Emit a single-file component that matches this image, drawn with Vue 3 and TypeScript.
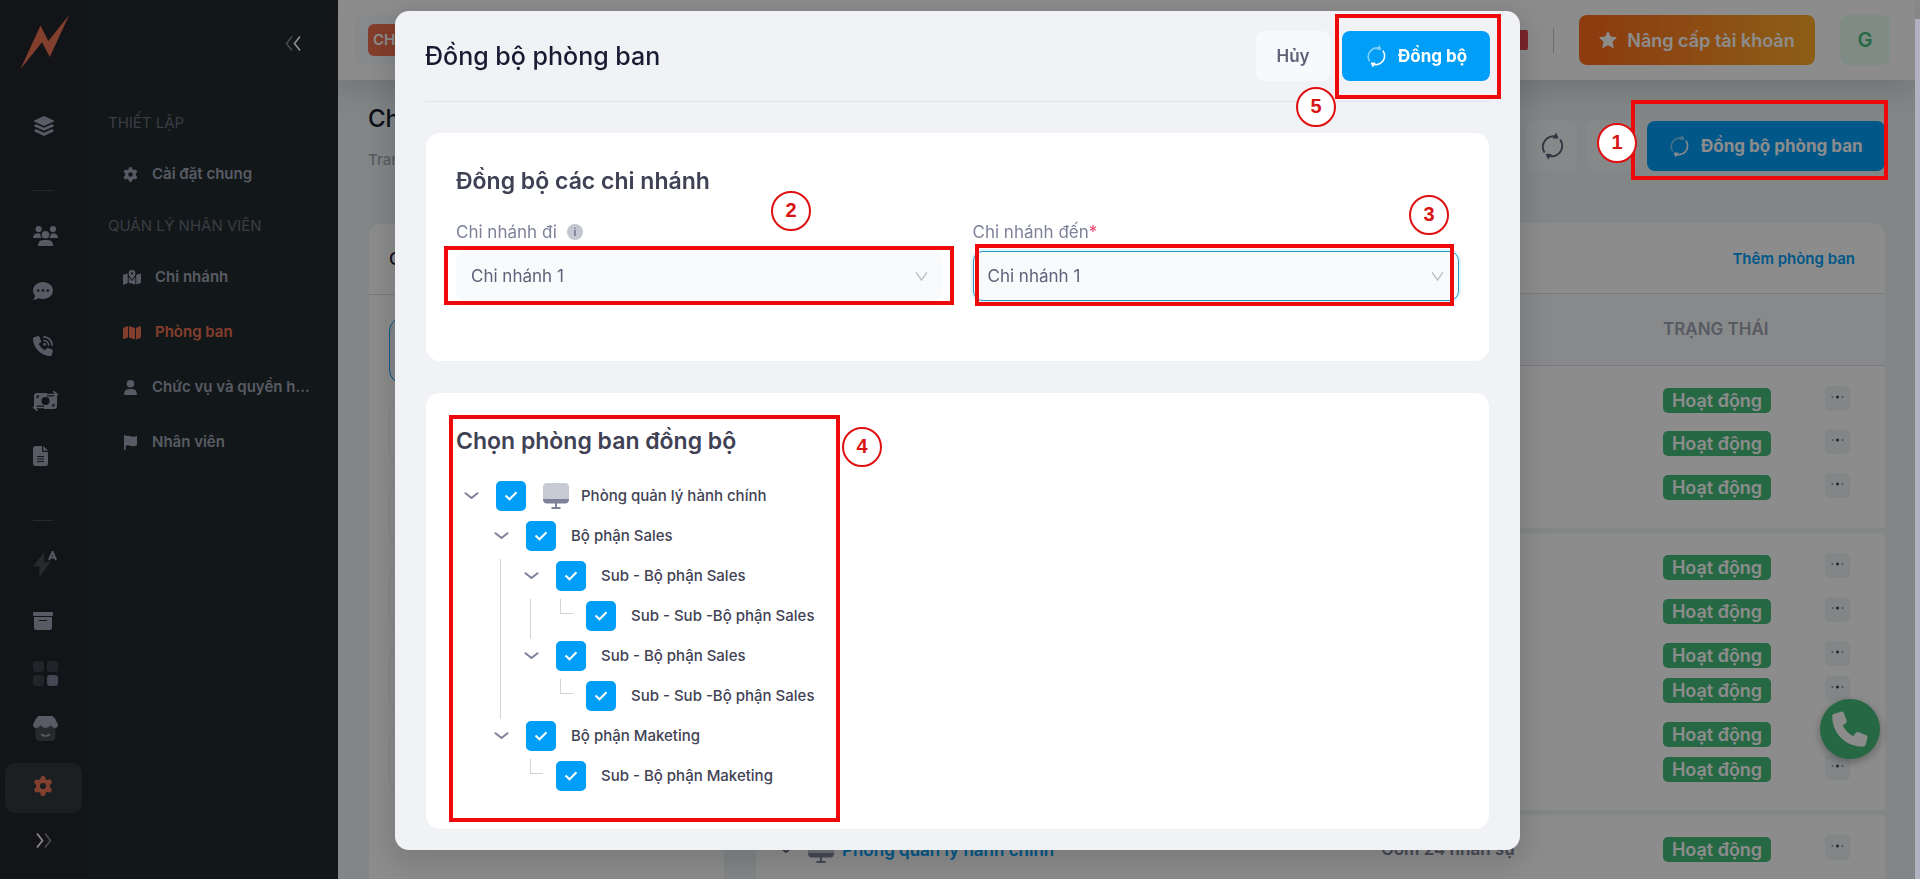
<script setup lang="ts">
import { ref } from 'vue'

interface TreeRow {
  id: string
  label: string
  guides: boolean[]
  leaf: boolean
  root?: boolean
  checked: boolean
}

interface StaffRow {
  name?: string
  staff?: string
  compact: boolean
}

const branches = ['Chi nhánh 1', 'Chi nhánh 2', 'Chi nhánh 3']
const fromBranch = ref('Chi nhánh 1')
const toBranch = ref('Chi nhánh 1')

const tree = ref<TreeRow[]>([
  { id: 'n1', label: 'Phòng quản lý hành chính', guides: [], leaf: false, root: true, checked: true },
  { id: 'n2', label: 'Bộ phận Sales', guides: [false], leaf: false, checked: true },
  { id: 'n3', label: 'Sub - Bộ phận Sales', guides: [false, true], leaf: false, checked: true },
  { id: 'n4', label: 'Sub - Sub -Bộ phận Sales', guides: [false, true, true], leaf: true, checked: true },
  { id: 'n5', label: 'Sub - Bộ phận Sales', guides: [false, true], leaf: false, checked: true },
  { id: 'n6', label: 'Sub - Sub -Bộ phận Sales', guides: [false, true, false], leaf: true, checked: true },
  { id: 'n7', label: 'Bộ phận Maketing', guides: [false], leaf: false, checked: true },
  { id: 'n8', label: 'Sub - Bộ phận Maketing', guides: [false, false], leaf: true, checked: true },
])

const groups: StaffRow[][] = [
  [{ compact: false }, { compact: false }, { compact: true }],
  [
    { compact: false },
    { compact: false },
    { compact: true },
    { compact: false },
    { compact: true },
    { compact: true },
  ],
  [{ name: 'Phòng quản lý hành chính', staff: 'Gồm 24 nhân sự', compact: true }],
]
const cardCount = 6
</script>

<template>
  <svg class="defs" aria-hidden="true">
    <symbol id="i-sync" viewBox="0 0 24 28">
      <g class="fade">
        <path d="M4.5 20.5A10.5 10.5 0 0 1 17.5 5.2" fill="none" stroke="currentColor" stroke-width="2" />
        <path d="M16.2 0.5L18.6 6.4L12.6 6.6Z" fill="currentColor" />
      </g>
      <path d="M20.6 8.2A10.5 10.5 0 0 1 7 23.2" fill="none" stroke="currentColor" stroke-width="2" stroke-linecap="round" />
      <path d="M8 27.8L5.8 21.8L11.8 22Z" fill="currentColor" />
    </symbol>
    <symbol id="i-gear" viewBox="0 0 20 20">
      <path fill="currentColor" fill-rule="evenodd" d="M8 .6Q10-.5 12 .6L12.500 3.100L14.400 4.200L16.800 3.300Q18.800 4.600 19 6.800L17 8.600V11.400L19 13.200Q18.800 15.400 16.800 16.700L14.400 15.800L12.500 16.900L12 19.400Q10 20.500 8 19.400L7.500 16.900L5.600 15.800L3.200 16.700Q1.200 15.400 1 13.200L3 11.400V8.600L1 6.800Q1.200 4.600 3.200 3.300L5.600 4.200L7.500 3.100ZM10 6.900A3.100 3.100 0 1 0 10 13.100A3.100 3.100 0 1 0 10 6.900Z" />
    </symbol>
    <symbol id="i-phone" viewBox="0 0 36 36">
      <path fill="currentColor" d="M1.600 3.100L9 .7Q11 .2 11.800 2L14.700 9.500Q15.200 11 14 12L10.800 14.400Q14.300 21.500 21.200 25.200L24 21.700Q25 20.700 26.300 21.100L34.200 24.200Q36 25 35.400 26.900L33.500 34Q33 35.500 31.200 35.600C14 36 0 22.500 .3 5Q.4 3.600 1.600 3.100Z" />
    </symbol>
    <symbol id="i-screen" viewBox="0 0 26 26">
      <path fill="#c8cad6" d="M4 0H22Q26 0 26 4V16H0V4Q0 0 4 0Z" />
      <path fill="#7e8299" d="M0 16H26Q26 20.500 22 20.500H14V24H17.500V26H8.500V24H12V20.500H4Q0 20.500 0 16Z" />
    </symbol>
    <symbol id="i-down" viewBox="0 0 14 8">
      <path d="M1 1.200L7 6L13 1.200" fill="none" stroke="currentColor" stroke-width="2" stroke-linecap="round" stroke-linejoin="round" />
    </symbol>
    <symbol id="i-caret" viewBox="0 0 14 10">
      <path d="M1 .5L7 9L13 .5" fill="none" stroke="currentColor" stroke-width="1.300" />
    </symbol>
  </svg>

  <div class="app">
    <nav class="rail" aria-label="Thanh chính">
      <svg class="logo" viewBox="0 0 50 54"><path fill="currentColor" d="M.5 54L20.500 10.500L28.300 26L49.200 0L29.800 42L22 27.200Z" /></svg>
      <a href="#" class="rail-item" aria-label="Tổng quan">
        <svg width="22" height="20" viewBox="0 0 22 20" fill="currentColor"><path d="M11 0L20.500 4.300Q21.500 5 20.500 5.700L11 10L1.500 5.700Q.5 5 1.500 4.300Z" /><path d="M3.300 8.200L11 11.700L18.700 8.200L20.500 9Q21.500 9.700 20.500 10.400L11 14.700L1.500 10.400Q.5 9.700 1.500 9Z" /><path d="M3.300 13.300L11 16.800L18.700 13.300L20.500 14.100Q21.500 14.900 20.500 15.600L11 20L1.500 15.600Q.5 14.900 1.500 14.100Z" /></svg>
      </a>
      <hr class="rail-rule" />
      <a href="#" class="rail-item" aria-label="Nhân sự">
        <svg width="25" height="20" viewBox="0 0 25 20" fill="currentColor"><circle cx="5.600" cy="3.100" r="3.100" /><circle cx="20" cy="3.100" r="3.100" /><circle cx="12.500" cy="8.700" r="3.800" /><path d="M0 12Q.3 7.500 4 7.500H7.200Q7 10.500 8.800 12ZM25 12Q24.700 7.500 21 7.500H17.800Q18 10.500 16.200 12ZM5 20Q5 14 10 14H15Q20 14 20 20Z" /></svg>
      </a>
      <a href="#" class="rail-item" aria-label="Tin nhắn">
        <svg width="20" height="20" viewBox="0 0 20 20"><path fill="currentColor" d="M10 1C15.500 1 20 4.800 20 9.500S15.500 18 10 18Q7.600 18 5.500 17.200Q3 19 0 19Q1.800 17 2 14.800Q0 12.500 0 9.500C0 4.800 4.500 1 10 1Z" /><g fill="#24252c"><circle cx="5.200" cy="9.500" r="1.300" /><circle cx="10" cy="9.500" r="1.300" /><circle cx="14.800" cy="9.500" r="1.300" /></g></svg>
      </a>
      <a href="#" class="rail-item" aria-label="Tổng đài">
        <svg width="20" height="20" viewBox="0 0 20 20"><path fill="currentColor" d="M1 1.200L5 .1Q6.200 0 6.600 1L8 5Q8.200 6 7.500 6.500L5.600 8Q7.500 12 12 14.300L13.500 12.400Q14 11.800 15 12L19 13.500Q20 14 19.900 15L18.800 19Q18.500 20 17.500 20C8 20 0 12 0 2.500Q0 1.500 1 1.200Z" /><path fill="none" stroke="currentColor" stroke-width="1.700" stroke-linecap="round" d="M11 .9A8.200 8.200 0 0 1 19.100 9M11 4.500A4.600 4.600 0 0 1 15.500 9" /><circle cx="11.600" cy="8.400" r="1.400" fill="currentColor" /></svg>
      </a>
      <a href="#" class="rail-item" aria-label="Thu chi">
        <svg width="25" height="20" viewBox="0 0 25 20"><rect x="1" y="2" width="23" height="16" rx="3" fill="currentColor" /><g fill="#24252c"><circle cx="12.500" cy="10" r="4" /><path d="M3.500 4.500H6.500Q6 7 3.500 7.500ZM21.500 15.500H18.500Q19 13 21.500 12.500Z" /></g><path fill="none" stroke="#24252c" stroke-width="4" d="M14 3.500H22M11 16.500H3" /><path fill="none" stroke="currentColor" stroke-width="1.700" stroke-linecap="round" d="M14 3.500H24M21 .8L24.200 3.500L21 6.200M11 16.500H1M4 13.800L.8 16.500L4 19.200" /></svg>
      </a>
      <a href="#" class="rail-item" aria-label="Tài liệu">
        <svg width="15" height="20" viewBox="0 0 15 20"><path fill="currentColor" d="M2.500 0H9V4.500Q9 6 10.500 6H15V17.500Q15 20 12.500 20H2.500Q0 20 0 17.500V2.500Q0 0 2.500 0ZM10.300 0L15 4.800H10.300Z" /><path stroke="#24252c" stroke-width="1.100" d="M4 10.500H11M4 13H11M4 15.500H11" /></svg>
      </a>
      <hr class="rail-rule" />
      <a href="#" class="rail-item tall" aria-label="Tự động hóa">
        <svg width="25" height="26" viewBox="0 0 25 26"><path fill="#494b52" d="M11 1.500L0 15.500H6.500V26L17.500 11H11Z" /><path fill="none" stroke="currentColor" stroke-width="2" d="M16 9L19.500 .8L23 9M17 6.500H22" /></svg>
      </a>
      <a href="#" class="rail-item" aria-label="Kho">
        <svg width="20" height="20" viewBox="0 0 20 20" fill="currentColor"><rect y="1" width="20" height="4" rx="1" /><path fill-rule="evenodd" d="M1 6H19V16.500Q19 19 16.500 19H3.500Q1 19 1 16.500ZM6 9V10H14V9Z" /></svg>
      </a>
      <a href="#" class="rail-item tall" aria-label="Ứng dụng">
        <svg width="25" height="25" viewBox="0 0 25 25"><g fill="#3f424b"><rect width="11" height="11" rx="3" /><rect x="14" width="11" height="11" rx="3" /><rect y="14" width="11" height="11" rx="3" /></g><rect x="14" y="14" width="11" height="11" rx="3" fill="#7e8299" /></svg>
      </a>
      <a href="#" class="rail-item tall" aria-label="Cửa hàng">
        <svg width="25" height="25" viewBox="0 0 25 25"><path fill="#494b52" d="M2.500 8H22.500V20.500Q22.500 25 18.500 25H6.500Q2.500 25 2.500 20.500Z" /><path fill="currentColor" d="M5.500 0H19.500L22 2.500L25 8.500Q25 12 21.500 12Q19 12 18 9.300Q15.500 12 12.500 12Q9.500 12 7.500 9.300Q6.500 12 3.500 12Q0 12 0 8.500L3 2.500Z" /><path d="M8.500 18.500Q12.500 21.500 16.500 18.500" stroke="currentColor" stroke-width="1.600" fill="none" stroke-linecap="round" /></svg>
      </a>
      <a href="#" class="rail-item active" aria-label="Cài đặt"><svg width="20" height="20"><use href="#i-gear" /></svg></a>
      <button type="button" class="rail-more" aria-label="Mở rộng">
        <svg width="16" height="15" viewBox="0 0 16 15" fill="none" stroke="#fff" stroke-width="1.700"><path d="M1 .5L6.500 7.500L1 14.500" /><path d="M9 .5L14.500 7.500L9 14.500" opacity=".45" /></svg>
      </button>
    </nav>

    <aside class="submenu">
      <button type="button" class="collapse" aria-label="Thu gọn">
        <svg width="16" height="15" viewBox="0 0 16 15" fill="none" stroke="#fff" stroke-width="1.700"><path d="M7 .5L1.500 7.500L7 14.500" opacity=".4" /><path d="M15 .5L9.500 7.500L15 14.500" /></svg>
      </button>
      <h2 class="menu-title">THIẾT LẬP</h2>
      <a href="#" class="menu-item"><svg width="15" height="15"><use href="#i-gear" /></svg><span>Cài đặt chung</span></a>
      <h2 class="menu-title">QUẢN LÝ NHÂN VIÊN</h2>
      <a href="#" class="menu-item">
        <svg width="18" height="15" viewBox="0 0 18 15" fill="currentColor"><path fill-rule="evenodd" d="M9 0A3.400 3.400 0 0 1 12.400 3.400Q12.400 5.500 9 9.500Q5.600 5.500 5.600 3.400A3.400 3.400 0 0 1 9 0ZM9 2.300A1.100 1.100 0 1 0 9 4.500A1.100 1.100 0 1 0 9 2.300Z" /><path d="M0 6Q0 5 1 4.600L4.700 3.600V13L1 14.700Q0 15 0 14ZM18 4.600Q18 3.400 17 3.600L13.200 5V14.500L17 13.200Q18 12.800 18 12ZM5.700 7L9 11L12.300 7V14.500L5.700 12.800Z" /></svg><span>Chi nhánh</span>
      </a>
      <a href="#" class="menu-item current">
        <svg width="18" height="15" viewBox="0 0 18 15" fill="currentColor"><path d="M0 4Q0 3 1 2.500L5 1V12.500L1 14Q0 14.200 0 13.200ZM6 1L12 3V14.500L6 12.500ZM13 3L17 1.300Q18 1 18 2V11.500Q18 12.500 17 12.900L13 14.500Z" /></svg><span>Phòng ban</span>
      </a>
      <a href="#" class="menu-item">
        <svg width="15" height="15" viewBox="0 0 15 15" fill="currentColor"><circle cx="7.500" cy="3.800" r="3.800" /><path d="M1 15Q1 9 6 9H9Q14 9 14 15Z" /></svg><span>Chức vụ và quyền h...</span>
      </a>
      <a href="#" class="menu-item">
        <svg width="15" height="15" viewBox="0 0 15 15" fill="currentColor"><path d="M1 0H2.600V1.200Q5 .3 7.500 1.300Q10.500 2.500 14 .8V10.300Q10.500 12 7.500 10.800Q5 9.900 2.600 10.800V15H1Z" /></svg><span>Nhân viên</span>
      </a>
    </aside>

    <main class="main">
      <header class="topbar">
        <div class="company"><span class="chip">CH</span></div>
        <div class="topbar-end">
          <span class="flag"></span>
          <span class="bar"></span>
          <button type="button" class="upgrade">
            <svg width="18" height="18" viewBox="0 0 18 18"><path fill="currentColor" stroke="currentColor" stroke-linejoin="round" d="M9 .8L11.500 6L17.300 6.700L13 10.700L14.200 16.600L9 13.700L3.800 16.600L5 10.700L.7 6.700L6.500 6Z" /></svg>
            Nâng cấp tài khoản
          </button>
          <span class="avatar">G</span>
        </div>
      </header>

      <div class="content">
        <div class="page-head">
          <div>
            <h1 class="page-title">Chi nhánh</h1>
            <p class="crumb">Trang chủ</p>
          </div>
          <div class="actions">
            <button type="button" class="square" aria-label="Làm mới"><svg width="24" height="28" class="solid"><use href="#i-sync" /></svg></button>
            <button type="button" class="square" aria-label="Bộ lọc"></button>
            <div class="marked">
              <button type="button" class="primary wide"><svg width="20" height="24"><use href="#i-sync" /></svg>Đồng bộ phòng ban</button>
              <span class="frame f1"></span><span class="dot d1">1</span>
            </div>
          </div>
        </div>

        <div class="columns">
          <section class="panel branch-panel">
            <h2 class="panel-head">Chi nhánh</h2>
            <ul class="branch-list">
              <li v-for="i in cardCount" :key="i" :class="{ on: i === 1 }"></li>
            </ul>
          </section>

          <section class="panel table-panel">
            <div class="panel-head end"><a href="#">Thêm phòng ban</a></div>
            <table>
              <thead>
                <tr><th></th><th class="c-staff"></th><th class="c-status">TRẠNG THÁI</th><th class="c-more"></th></tr>
              </thead>
              <tbody v-for="(g, gi) in groups" :key="gi">
                <tr v-for="(r, ri) in g" :key="ri" :class="{ compact: r.compact }">
                  <td>
                    <div v-if="r.name" class="unit">
                      <svg width="14" height="8"><use href="#i-down" /></svg>
                      <svg width="26" height="26"><use href="#i-screen" /></svg>
                      <a href="#">{{ r.name }}</a>
                    </div>
                  </td>
                  <td class="staff">{{ r.staff }}</td>
                  <td><span class="badge">Hoạt động</span></td>
                  <td>
                    <button type="button" class="more" aria-label="Tùy chọn">
                      <svg width="13" height="4" viewBox="0 0 13 4" fill="#3f4254"><circle cx="1.500" cy="2" r="1.100" opacity=".5" /><circle cx="6.500" cy="2" r="1.500" /><circle cx="11.500" cy="2" r="1.100" opacity=".5" /></svg>
                    </button>
                  </td>
                </tr>
              </tbody>
            </table>
          </section>
        </div>
      </div>
      <button type="button" class="fab" aria-label="Gọi điện"><svg width="36" height="36"><use href="#i-phone" /></svg></button>
    </main>
  </div>

  <div class="overlay">
    <section class="modal" role="dialog" aria-labelledby="modal-title">
      <header class="modal-head">
        <h2 id="modal-title">Đồng bộ phòng ban</h2>
        <div class="modal-actions">
          <button type="button" class="cancel">Hủy</button>
          <div class="marked">
            <button type="button" class="primary"><svg width="20" height="24"><use href="#i-sync" /></svg>Đồng bộ</button>
            <span class="frame f5"></span><span class="dot d5">5</span>
          </div>
        </div>
      </header>

      <div class="card">
        <h3>Đồng bộ các chi nhánh</h3>
        <div class="fields">
          <div class="field">
            <label for="from">Chi nhánh đi <span class="info">i</span></label>
            <div class="picker marked">
              <select id="from" v-model="fromBranch"><option v-for="b in branches" :key="b">{{ b }}</option></select>
              <svg width="13" height="9"><use href="#i-caret" /></svg>
              <span class="frame f2"></span><span class="dot d2">2</span>
            </div>
          </div>
          <div class="field">
            <label for="to">Chi nhánh đến<span class="req">*</span></label>
            <div class="picker focus marked">
              <select id="to" v-model="toBranch"><option v-for="b in branches" :key="b">{{ b }}</option></select>
              <svg width="13" height="9"><use href="#i-caret" /></svg>
              <span class="frame f3"></span><span class="dot d3">3</span>
            </div>
          </div>
        </div>
      </div>

      <div class="card marked">
        <h3>Chọn phòng ban đồng bộ</h3>
        <ul class="tree">
          <li v-for="n in tree" :key="n.id" class="node">
            <span v-for="(g, i) in n.guides" :key="i" class="guide" :class="{ line: g }"></span>
            <span v-if="n.leaf" class="elbow"></span>
            <button v-else type="button" class="toggle" aria-label="Thu gọn"><svg width="15" height="8"><use href="#i-down" /></svg></button>
            <span class="check">
              <input :id="n.id" v-model="n.checked" type="checkbox" />
              <svg width="14" height="10" viewBox="0 0 14 10"><path d="M1.500 4.500L5.500 8.300L12.500 1.200" fill="none" stroke="#fff" stroke-width="2" /></svg>
            </span>
            <svg v-if="n.root" class="screen" width="26" height="26"><use href="#i-screen" /></svg>
            <label :for="n.id">{{ n.label }}</label>
          </li>
        </ul>
        <span class="frame f4"></span><span class="dot d4">4</span>
      </div>
    </section>
  </div>
  <div class="scroll-thumb"></div>
</template>

<style>
body {
  overflow: hidden;
}
</style>

<style scoped>
* {
  box-sizing: border-box;
}
.defs {
  position: absolute;
  width: 0;
  height: 0;
}
.app {
  display: flex;
  height: 100vh;
  padding-right: 5px;
  overflow: hidden;
  background: #fff;
}
.app,
.overlay,
button,
select {
  font-family: Inter, 'Noto Sans', sans-serif;
}
button {
  border: 0;
  padding: 0;
  cursor: pointer;
}
a {
  text-decoration: none;
}
h1,
h2,
h3,
p,
ul {
  margin: 0;
  padding: 0;
  list-style: none;
}
svg {
  flex: none;
  display: block;
}
.fade {
  opacity: var(--fade, 0.5);
}

/* icon rail */
.rail {
  flex: 0 0 88px;
  display: flex;
  flex-direction: column;
  gap: 5px;
  padding: 15px 5px 0;
  background: #24252c;
  color: #a1a5b7;
}
.logo {
  width: 50px;
  height: 54px;
  margin: 0 0 29px 15px;
  color: #ef7352;
}
.rail-item {
  flex: none;
  width: 77px;
  height: 50px;
  padding: 13px 0 0 28px;
  border-radius: 10px;
  color: inherit;
}
.rail-item.tall {
  padding-top: 8px;
}
.rail-item.active {
  background: #33393c;
  color: #ef7352;
}
.rail-rule {
  flex: none;
  width: 20px;
  height: 1px;
  margin: 32px 0 17px 28px;
  border: 0;
  background: #4a4c55;
}
.rail-more {
  width: 16px;
  margin: 15px 0 0 31px;
  background: none;
}

/* section menu */
.submenu {
  flex: 0 0 250px;
  min-width: 0;
  display: flex;
  flex-direction: column;
  padding: 36px 10px 0 20px;
  background: #222b2e;
}
.collapse {
  align-self: flex-end;
  margin: 0 27px 45px 0;
  background: none;
}
.menu-title {
  font-size: 15px;
  font-weight: 400;
  line-height: 53px;
  color: #6b6e7a;
}
.menu-item {
  display: flex;
  align-items: center;
  gap: 14px;
  height: 50px;
  padding: 0 0 0 15px;
  font-size: 15px;
  font-weight: 600;
  color: #a1a5b7;
}
.menu-item + .menu-item {
  margin-top: 5px;
}
.menu-item span {
  white-space: nowrap;
  line-height: 24px;
}
.menu-item.current {
  color: #ef7352;
}

/* page behind the dialog */
.main {
  position: relative;
  flex: 1;
  min-width: 0;
  display: flex;
  flex-direction: column;
  background: #edf4f4;
}
.topbar {
  position: relative;
  flex: none;
  display: flex;
  justify-content: space-between;
  align-items: center;
  height: 80px;
  padding: 0 25px 0 17px;
  background: #fff;
  box-shadow: 0 10px 30px rgba(82, 63, 105, 0.2);
}
.company {
  display: flex;
  align-items: center;
  height: 50px;
  padding: 0 13px;
  border-radius: 8px;
  background: #f8fafb;
}
.chip {
  padding: 0 5px;
  border-radius: 6px;
  background: #f1714f;
  color: #fff;
  font-size: 15px;
  font-weight: 600;
  line-height: 32px;
}
.topbar-end {
  display: flex;
  align-items: center;
  gap: 25px;
}
.flag {
  width: 30px;
  height: 20px;
  border-radius: 2px;
  background: #e0444e;
}
.bar {
  width: 1px;
  height: 25px;
  background: #c4c4cc;
}
.upgrade {
  display: flex;
  align-items: center;
  justify-content: center;
  gap: 10px;
  width: 236px;
  height: 50px;
  border-radius: 8px;
  background: linear-gradient(90deg, #ff6a1c, #ffab2a);
  color: #fff;
  font-size: 18px;
  font-weight: 600;
}
.avatar {
  width: 50px;
  border-radius: 8px;
  background: #e8fff3;
  color: #47be7d;
  font-size: 20px;
  font-weight: 600;
  line-height: 50px;
  text-align: center;
}
.content {
  flex: 1;
  display: flex;
  flex-direction: column;
  min-height: 0;
  padding: 21px 30px 0;
}
.page-head {
  flex: none;
  display: flex;
  justify-content: space-between;
  height: 122px;
}
.page-title {
  font-size: 24px;
  font-weight: 500;
  line-height: 36px;
  color: #181c32;
}
.crumb {
  margin-top: 11px;
  font-size: 15px;
  font-weight: 500;
  line-height: 24px;
  color: #a1a5b7;
}
.actions {
  display: flex;
  align-items: flex-start;
  gap: 10px;
  padding-top: 20px;
}
.square {
  display: flex;
  align-items: center;
  justify-content: center;
  width: 50px;
  height: 50px;
  border-radius: 8px;
  background: #f5f8fa;
  color: #5e6278;
}
.solid {
  --fade: 1;
}
.primary {
  display: flex;
  align-items: center;
  gap: 12px;
  min-width: 148px;
  height: 50px;
  padding: 0 18px 0 24px;
  border-radius: 8px;
  background: #009ef7;
  color: #fff;
  font-size: 17px;
  font-weight: 700;
  white-space: nowrap;
}
.primary.wide {
  min-width: 238px;
  padding: 0 16px 0 22px;
}
.columns {
  flex: 1;
  display: flex;
  gap: 31px;
  min-height: 0;
}
.panel {
  border-radius: 12px 12px 0 0;
  background: #fff;
  overflow: hidden;
}
.branch-panel {
  flex: 0 0 357px;
  border: solid #eff2f5;
  border-width: 1px 1px 0;
}
.table-panel {
  flex: 1;
}
.panel-head {
  display: flex;
  align-items: center;
  height: 71px;
  padding: 0 20px;
  border-bottom: 1px solid #dcdee6;
  font-size: 17px;
  font-weight: 500;
  color: #181c32;
}
.panel-head.end {
  justify-content: flex-end;
  padding: 0 30px;
}
.panel-head.end a {
  font-size: 15px;
  font-weight: 600;
  color: #009ef7;
}
.branch-list {
  display: flex;
  flex-direction: column;
  gap: 15px;
  padding: 22px 20px;
}
.branch-list li {
  flex: none;
  height: 67px;
  border: 1px solid #eceef3;
  border-radius: 14px;
}
.branch-list .on {
  border-color: #009ef7;
  background: #f4f6fc;
}
table {
  width: 100%;
  border-collapse: collapse;
  table-layout: fixed;
}
th {
  height: 71px;
  padding: 0;
  border-bottom: 1px solid #dcdee6;
  background: #f8f9fc;
  font-size: 17px;
  font-weight: 600;
  text-align: left;
  color: #a1a5b7;
}
.c-staff {
  width: 282px;
}
.c-status {
  width: 162px;
}
.c-more {
  width: 60px;
}
td {
  height: 44px;
  padding: 0;
  vertical-align: top;
}
.compact td {
  height: 35px;
}
tbody tr:first-child td {
  height: 66px;
  padding-top: 22px;
}
tbody tr:last-child td {
  height: 53px;
}
tbody tr:only-child td {
  height: 75px;
}
tbody + tbody tr:first-child {
  box-shadow: inset 0 5px #edf4f4;
}
tbody + tbody tr:first-child td {
  height: 71px;
  padding-top: 27px;
}
tbody + tbody tr:only-child td {
  height: 80px;
}
.unit {
  display: flex;
  align-items: center;
  height: 26px;
  padding-left: 23px;
  font-size: 17px;
  font-weight: 600;
  color: #5e6278;
}
.unit svg + svg {
  margin: 0 8px 0 15px;
}
.unit a {
  color: #009ef7;
}
.staff {
  font-size: 17px;
  font-weight: 600;
  line-height: 24px;
  color: #7e8299;
}
.badge {
  display: block;
  width: 108px;
  border-radius: 5px;
  background: #47be7d;
  color: #fff;
  font-size: 18px;
  font-weight: 600;
  line-height: 25px;
  text-align: center;
}
.more {
  display: flex;
  justify-content: center;
  width: 25px;
  height: 25px;
  margin-top: -2px;
  padding-top: 9px;
  border-radius: 5px;
  background: #eef4f5;
}
.fab {
  position: absolute;
  right: 35px;
  bottom: 120px;
  display: flex;
  align-items: center;
  justify-content: center;
  width: 60px;
  height: 60px;
  border-radius: 50%;
  background: #47be7d;
  box-shadow: 0 3px 8px rgba(0, 0, 0, 0.3);
  color: #fff;
}

/* dialog */
.overlay {
  position: fixed;
  inset: 0;
  padding: 11px 5px 0 0;
  background: rgba(0, 0, 0, 0.45);
}
.modal {
  display: flex;
  flex-direction: column;
  width: 1125px;
  max-width: 100%;
  margin: 0 auto;
  padding: 0 31px 21px;
  border-radius: 14px;
  background: #f1f2f6;
  box-shadow: 0 9px 28px 8px rgba(0, 0, 0, 0.12);
}
.modal-head {
  display: flex;
  justify-content: space-between;
  align-items: center;
  height: 91px;
  margin: 0 -1px 31px;
  border-bottom: 1px solid #e2e4ea;
}
.modal-head h2 {
  font-size: 25px;
  font-weight: 500;
  color: #181c32;
}
.modal-actions {
  display: flex;
  gap: 12px;
}
.cancel {
  width: 74px;
  height: 50px;
  border-radius: 8px;
  background: #f8f9fc;
  color: #5e6278;
  font-size: 17px;
  font-weight: 600;
}
.card {
  min-height: 228px;
  padding: 30px 30px 46px;
  border-radius: 14px;
  background: #fff;
}
.card + .card {
  margin-top: 32px;
  padding-bottom: 30px;
}
.card h3 {
  font-size: 23px;
  font-weight: 600;
  line-height: 36px;
  color: #3f4254;
}
.fields {
  display: grid;
  grid-template-columns: 1fr 1fr;
  gap: 30px;
  margin-top: 20px;
}
.field label {
  display: flex;
  align-items: center;
  height: 26px;
  margin-bottom: 6px;
  font-size: 17px;
  color: #7e8299;
}
.info {
  width: 16px;
  height: 16px;
  margin-left: 10px;
  border-radius: 50%;
  background: #c4c6d2;
  color: #6b6f84;
  font-size: 11px;
  font-weight: 600;
  line-height: 16px;
  text-align: center;
}
.req {
  color: #f1416c;
}
.picker {
  display: grid;
  align-items: center;
}
.picker select,
.picker svg {
  grid-area: 1 / 1;
}
.picker select {
  width: 100%;
  height: 50px;
  padding: 0 14px;
  border: 1px solid transparent;
  border-radius: 10px;
  background: #f9fafc;
  color: #5e6278;
  font-size: 17px;
  appearance: none;
}
.picker svg {
  justify-self: end;
  margin-right: 15px;
  color: #b5b5bf;
  pointer-events: none;
}
.picker.focus select {
  border-color: #2e93c4;
  box-shadow: 0 0 0 2px #dff5fd;
}
.tree {
  margin-top: 20px;
}
.node {
  display: flex;
  align-items: flex-start;
  height: 40px;
}
.guide,
.elbow {
  width: 30px;
  height: 40px;
  background: linear-gradient(#d3d3d6, #d3d3d6) 14px 0 / 1px 0 no-repeat;
}
.guide.line {
  background-size: 1px 40px;
}
.elbow {
  height: 15px;
  background:
    linear-gradient(#d3d3d6, #d3d3d6) 14px 0 / 1px 15px no-repeat,
    linear-gradient(#d3d3d6, #d3d3d6) 14px 14px / 13px 1px no-repeat;
}
.toggle {
  display: flex;
  justify-content: center;
  align-items: center;
  width: 30px;
  height: 34px;
  background: none;
  color: #7e8299;
}
.check {
  display: grid;
  place-items: center;
  margin: 2px 15px 0 10px;
}
.check input,
.check svg {
  grid-area: 1 / 1;
}
.check input {
  width: 30px;
  height: 30px;
  margin: 0;
  border-radius: 5px;
  background: #ebedf3;
  appearance: none;
}
.check input:checked {
  background: #009ef7;
}
.check svg {
  pointer-events: none;
}
.screen {
  margin: 4px 12px 0 2px;
}
.node label {
  font-size: 15px;
  font-weight: 500;
  line-height: 34px;
  color: #3f4254;
}

/* step markers */
.marked {
  position: relative;
}
.frame,
.dot {
  position: absolute;
  pointer-events: none;
}
.frame {
  z-index: 5;
  border: 4px solid #ee0a0a;
}
.dot {
  z-index: 6;
  width: 40px;
  height: 40px;
  border: 2px solid #e01010;
  border-radius: 50%;
  background: #fff;
  color: #d91414;
  font: bold 20px/34px 'Liberation Sans', Arial, sans-serif;
  text-align: center;
}
.f1 { inset: -21px -3px -9px -16px; }
.d1 { left: -50px; top: 2px; }
.f5 { inset: -17px -11px -18px -7px; }
.d5 { left: -46px; top: 56px; }
.f2 { inset: -5px -11px -4px -12px; }
.d2 { left: 315px; top: -60px; }
.f3 { inset: -7px 5px -5px 2px; }
.d3 { right: 10px; top: -56px; }
.f4 { left: 23px; top: 22px; width: 391px; bottom: 7px; }
.d4 { left: 416px; top: 34px; }

.scroll-thumb {
  position: fixed;
  top: 19px;
  right: 0;
  bottom: 0;
  width: 5px;
  background: #b1b1c2;
}
</style>
